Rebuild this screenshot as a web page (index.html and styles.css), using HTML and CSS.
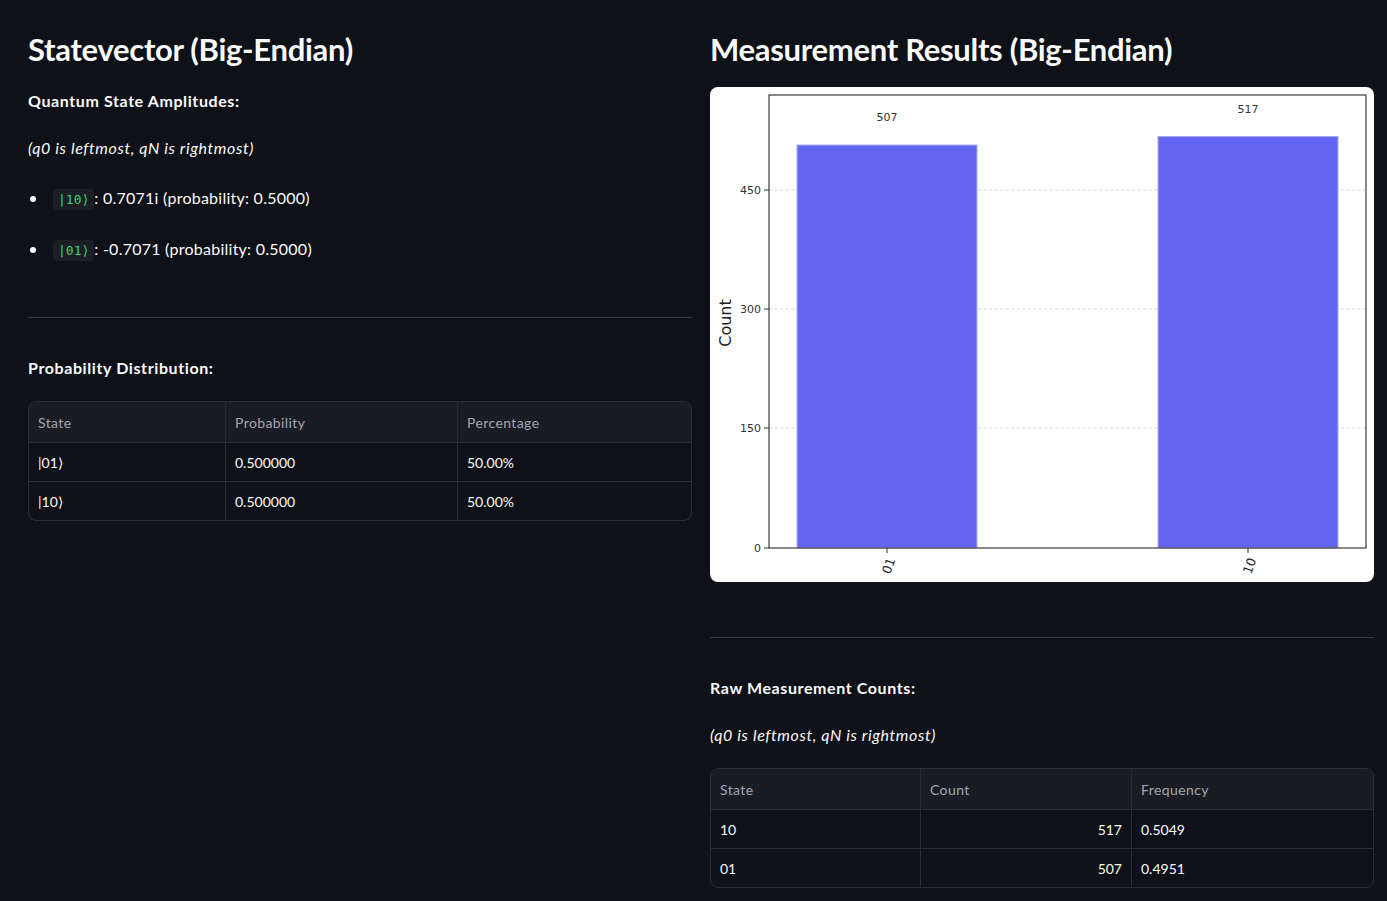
FILE: index.html
```html
<!DOCTYPE html>
<html lang="en">
<head>
<meta charset="utf-8">
<title>Quantum Results</title>
<link rel="stylesheet" href="styles.css">
</head>
<body>
<main class="page">
  <section class="col">
    <h2 class="title">Statevector (Big-Endian)</h2>
    <p class="strong p-first">Quantum State Amplitudes:</p>
    <p class="note">(q0 is leftmost, qN is rightmost)</p>
    <ul class="amps">
      <li><code>|10⟩</code>: 0.7071i (probability: 0.5000)</li>
      <li><code>|01⟩</code>: -0.7071 (probability: 0.5000)</li>
    </ul>
    <hr class="rule rule-left">
    <p class="strong p-after-rule">Probability Distribution:</p>
    <div class="table-wrap">
      <table class="grid">
        <colgroup><col class="l1"><col class="l2"><col class="l3"></colgroup>
        <thead><tr><th>State</th><th>Probability</th><th>Percentage</th></tr></thead>
        <tbody>
          <tr><td>|01⟩</td><td>0.500000</td><td>50.00%</td></tr>
          <tr><td>|10⟩</td><td>0.500000</td><td>50.00%</td></tr>
        </tbody>
      </table>
    </div>
  </section>

  <section class="col">
    <h2 class="title">Measurement Results (Big-Endian)</h2>
    <div class="chart">
      <svg viewBox="0 0 664 495" width="664" height="495" xmlns="http://www.w3.org/2000/svg">
        <g stroke="#cfcfcf" stroke-width="0.8" stroke-dasharray="3.5 2">
          <line x1="59" y1="103" x2="656" y2="103"/>
          <line x1="59" y1="222" x2="656" y2="222"/>
          <line x1="59" y1="341" x2="656" y2="341"/>
        </g>
        <rect x="87" y="58" width="180" height="403" fill="#6366f1" stroke="#a9abf8" stroke-width="1"/>
        <rect x="448" y="49.5" width="180" height="411.5" fill="#6366f1" stroke="#a9abf8" stroke-width="1"/>
        <rect x="59" y="8" width="597" height="453" fill="none" stroke="#4a4a4a" stroke-width="1.3"/>
        <g stroke="#333" stroke-width="1">
          <line x1="54" y1="103" x2="59" y2="103"/>
          <line x1="54" y1="222" x2="59" y2="222"/>
          <line x1="54" y1="341" x2="59" y2="341"/>
          <line x1="54" y1="461" x2="59" y2="461"/>
          <line x1="177" y1="461" x2="177" y2="466"/>
          <line x1="538" y1="461" x2="538" y2="466"/>
        </g>
        <g font-family="DejaVu Sans, sans-serif" font-size="11" fill="#333" text-anchor="end">
          <text x="51" y="107">450</text>
          <text x="51" y="226">300</text>
          <text x="51" y="345">150</text>
          <text x="51" y="465">0</text>
        </g>
        <g font-family="DejaVu Sans, sans-serif" font-size="11" fill="#333" text-anchor="middle">
          <text x="177" y="34">507</text>
          <text x="538" y="26">517</text>
        </g>
        <text transform="translate(21 236) rotate(-90)" font-family="DejaVu Sans, sans-serif" font-size="16" fill="#222" text-anchor="middle">Count</text>
        <g font-family="DejaVu Sans, sans-serif" font-size="12.5" fill="#222" text-anchor="middle">
          <text transform="translate(179 479) rotate(-70)" dy="4">01</text>
          <text transform="translate(540 479) rotate(-70)" dy="4">10</text>
        </g>
      </svg>
    </div>
    <hr class="rule rule-right">
    <p class="strong p-after-rule">Raw Measurement Counts:</p>
    <p class="note">(q0 is leftmost, qN is rightmost)</p>
    <div class="table-wrap">
      <table class="grid">
        <colgroup><col class="r1"><col class="r2"><col class="r3"></colgroup>
        <thead><tr><th>State</th><th>Count</th><th>Frequency</th></tr></thead>
        <tbody>
          <tr><td>10</td><td class="num">517</td><td>0.5049</td></tr>
          <tr><td>01</td><td class="num">507</td><td>0.4951</td></tr>
        </tbody>
      </table>
    </div>
  </section>
</main>
</body>
</html>
```

FILE: styles.css
```css
* { box-sizing: border-box; }

html, body {
  margin: 0;
  padding: 0;
  background: #0e1117;
}

body {
  color: #fafafa;
  font-family: Lato, "Noto Sans", sans-serif;
  font-size: 16px;
  width: 1387px;
  height: 901px;
  overflow: hidden;
}

.page {
  display: grid;
  grid-template-columns: 664px 664px;
  column-gap: 18px;
  padding: 29px 13px 0 28px;
}

.col {
  display: flex;
  flex-direction: column;
  min-width: 0;
}

.title {
  margin: 0;
  font-size: 31px;
  line-height: 40px;
  font-weight: 700;
  letter-spacing: -0.3px;
}

p {
  margin: 0;
  line-height: 26px;
}

.strong {
  font-weight: 700;
  letter-spacing: 0.6px;
}

.p-first { margin-top: 19px; }

.note {
  font-style: italic;
  letter-spacing: 0.6px;
  margin-top: 21px;
}

.amps {
  margin: 24px 0 0 0;
  padding-left: 25px;
  list-style: none;
}

.amps li {
  height: 26px;
  line-height: 26px;
  margin-bottom: 25px;
  letter-spacing: 0.25px;
}

.amps li::before {
  content: "";
  display: inline-block;
  width: 6px;
  height: 6px;
  border-radius: 50%;
  background: #fafafa;
  margin-left: -23px;
  margin-right: 17px;
  vertical-align: middle;
  position: relative;
  top: -1px;
}

.amps li:last-child { margin-bottom: 0; }

code {
  font-family: "DejaVu Sans Mono", "Liberation Mono", monospace;
  font-size: 13px;
  line-height: 16px;
  letter-spacing: 0;
  color: #3dd56d;
  background: #1c1e26;
  border-radius: 4px;
  padding: 3px 5px;
}

.rule {
  border: 0;
  border-top: 1px solid #36383f;
  margin: 0;
  height: 0;
  width: 100%;
}

.rule-left { margin-top: 55px; }
.rule-right { margin-top: 55px; }

.p-after-rule { margin-top: 37px; }

.chart {
  margin-top: 18px;
  background: #ffffff;
  border-radius: 8px;
  overflow: hidden;
  width: 664px;
  height: 495px;
}

.chart svg { display: block; }

.table-wrap {
  margin-top: 20px;
  border: 1px solid #2a2c34;
  border-radius: 8px;
  overflow: hidden;
}

.grid {
  width: 100%;
  border-collapse: separate;
  border-spacing: 0;
  table-layout: fixed;
  font-size: 14px;
}

.l1 { width: 197px; }
.l2 { width: 232px; }
.l3 { width: auto; }
.r1 { width: 210px; }
.r2 { width: 211px; }
.r3 { width: auto; }

.grid th,
.grid td {
  text-align: left;
  padding: 0 9px;
  border-right: 1px solid #2a2c34;
  white-space: nowrap;
}

.grid th:last-child,
.grid td:last-child { border-right: 0; }

.grid th {
  height: 40px;
  background: #1a1c24;
  color: #a3a6ae;
  font-weight: 400;
  letter-spacing: 0.4px;
}

.grid td {
  height: 39px;
  border-top: 1px solid #2a2c34;
  color: #fafafa;
}

.grid td.num { text-align: right; }
```
